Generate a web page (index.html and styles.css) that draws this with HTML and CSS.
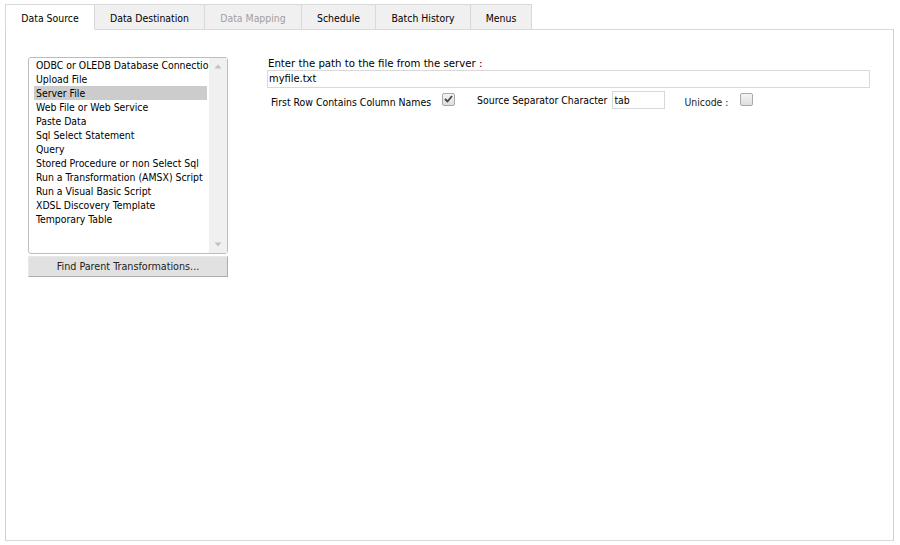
FILE: index.html
```html
<!DOCTYPE html>
<html>
<head>
<meta charset="utf-8">
<link rel="stylesheet" href="styles.css">
</head>
<body>
<div class="app">
  <div class="tabs">
    <div class="tab active t1">Data Source</div>
    <div class="tab t2">Data Destination</div>
    <div class="tab disabled t3">Data Mapping</div>
    <div class="tab t4">Schedule</div>
    <div class="tab t5">Batch History</div>
    <div class="tab t6">Menus</div>
  </div>
  <div class="panel">
    <div class="left">
      <div class="listbox">
        <div class="items">
          <div class="item">ODBC or OLEDB Database Connectio</div>
          <div class="item">Upload File</div>
          <div class="item sel">Server File</div>
          <div class="item">Web File or Web Service</div>
          <div class="item">Paste Data</div>
          <div class="item">Sql Select Statement</div>
          <div class="item">Query</div>
          <div class="item">Stored Procedure or non Select Sql</div>
          <div class="item">Run a Transformation (AMSX) Script</div>
          <div class="item">Run a Visual Basic Script</div>
          <div class="item">XDSL Discovery Template</div>
          <div class="item">Temporary Table</div>
        </div>
        <div class="scroll">
          <svg class="arrow" width="8" height="5" viewBox="0 0 8 5"><path d="M4 0.5 L7.5 4.5 L0.5 4.5 Z" fill="#c2c2c2"/></svg>
          <svg class="arrow" width="8" height="5" viewBox="0 0 8 5"><path d="M0.5 0.5 L7.5 0.5 L4 4.5 Z" fill="#c2c2c2"/></svg>
        </div>
      </div>
      <div class="btn">Find Parent Transformations...</div>
    </div>
    <div class="right">
      <div class="label">Enter the path to the file from the server :</div>
      <div class="input wide">myfile.txt</div>
      <div class="row">
        <span class="lbl first">First Row Contains Column Names</span>
        <span class="cb checked">
          <svg width="9" height="8" viewBox="0 0 9 8"><path d="M1 4 L3.5 6.5 L8 1" fill="none" stroke="#444" stroke-width="1.8"/></svg>
        </span>
        <span class="lbl sep">Source Separator Character</span>
        <span class="input small">tab</span>
        <span class="lbl uni">Unicode :</span>
        <span class="cb"></span>
      </div>
    </div>
  </div>
</div>
</body>
</html>
```
FILE: styles.css
```css
html, body {
  margin: 0;
  padding: 0;
  background: #fff;
}
body {
  font-family: "DejaVu Sans Condensed", "DejaVu Sans", "Liberation Sans", sans-serif;
  font-stretch: condensed;
  font-size: 10.4px;
  color: #000;
}
.app {
  width: 900px;
  height: 545px;
  padding: 4px 0 0 5px;
  box-sizing: border-box;
}
.tabs {
  display: flex;
  height: 25px;
  position: relative;
  z-index: 1;
}
.tab {
  box-sizing: border-box;
  height: 25px;
  background: #f0f0f0;
  border: 1px solid #d9d9d9;
  border-bottom: none;
  border-left: none;
  display: flex;
  align-items: center;
  justify-content: center;
  color: #000;
  padding-top: 2px;
}
.tab.active {
  background: #fff;
  border: 1px solid #d9d9d9;
  border-bottom: none;
  height: 26px;
  margin-bottom: -1px;
  padding-top: 0;
}
.tab.disabled { color: #a0a0a0; }
.t1 { width: 90px; }
.t2 { width: 110px; }
.t3 { width: 97px; }
.t4 { width: 74px; }
.t5 { width: 95px; }
.t6 { width: 61px; }
.panel {
  box-sizing: border-box;
  width: 889px;
  height: 512px;
  border: 1px solid #d9d9d9;
  border-left-color: #cfcfcf;
  border-right-color: #cfcfcf;
  display: flex;
  padding: 27px 0 0 22px;
}
.left {
  width: 200px;
  display: flex;
  flex-direction: column;
}
.listbox {
  box-sizing: border-box;
  height: 197px;
  border: 1px solid #bdbdbd;
  border-radius: 3px;
  display: flex;
  background: #fff;
}
.items {
  flex: 1;
  padding: 0 2px 0 5px;
  overflow: hidden;
}
.item {
  height: 14px;
  line-height: 14px;
  white-space: nowrap;
  padding-left: 2px;
}
.item.sel {
  background: #cccccc;
}
.scroll {
  width: 18px;
  background: #f0f0f0;
  display: flex;
  flex-direction: column;
  justify-content: space-between;
  align-items: center;
  padding: 6px 0 6px;
}
.btn {
  box-sizing: border-box;
  margin-top: 2px;
  height: 21px;
  background: #e1e1e1;
  border: 1px solid #adadad;
  border-top-color: #e8e8e8;
  border-left-color: #e8e8e8;
  display: flex;
  align-items: center;
  justify-content: center;
  color: #222;
  font-size: 10.7px;
}
.right {
  margin-left: 39px;
  padding-top: 1px;
  display: flex;
  flex-direction: column;
}
.label {
  height: 12px;
  line-height: 12px;
  margin-left: 1px;
  font-size: 11.3px;
}
.input {
  box-sizing: border-box;
  border: 1px solid #d9d9d9;
  background: #fff;
  height: 18px;
  line-height: 16px;
  padding-left: 1px;
  display: inline-block;
}
.wide {
  width: 603px;
  font-size: 11px;
}
.row {
  display: flex;
  align-items: center;
  margin-top: 2px;
  height: 19px;
}
.lbl { white-space: nowrap; }
.first { margin-left: 4px; margin-top: 5px; }
.cb {
  box-sizing: border-box;
  width: 13px;
  height: 13px;
  border: 1px solid #a9a9a9;
  border-radius: 2px;
  background: linear-gradient(#f4f4f4, #dedede);
  display: inline-flex;
  align-items: center;
  justify-content: center;
  margin-top: -1px;
}
.checked { margin-left: 11px; }
.sep { margin-left: 22px; }
.small {
  width: 53px;
  margin-left: 5px;
}
.uni { margin-left: 19px; margin-top: 5px; color: #222; }
.uni + .cb { margin-left: 12px; }
```
